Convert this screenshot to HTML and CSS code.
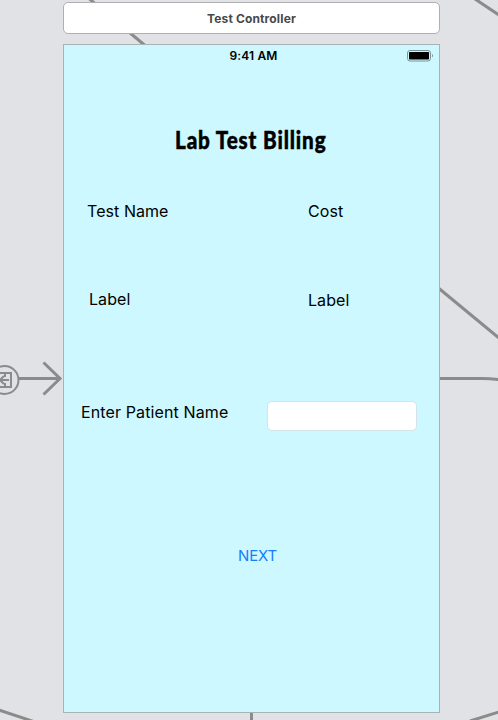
FILE: index.html
```html
<!DOCTYPE html>
<html lang="en">
<head>
<meta charset="utf-8">
<title>Test Controller</title>
<link rel="stylesheet" href="styles.css">
</head>
<body>
<svg class="connections" width="498" height="720" viewBox="0 0 498 720" aria-hidden="true">
  <path d="M86-4L148 48M472-3L502 17M436 286L502 340.500M436 378.500H482Q492 378.500 502 380M251.500 710V722M-4 709L38 723M470 721L502 711"/>
  <path d="M18 378.500H60M43.500 362.500L60 378.500L43.500 394.500"/>
  <g class="entry">
    <circle cx="4.500" cy="380" r="14"/>
    <path d="M-4 373H11V387H-4M5 373V377M5 383V387M9 380H0M4 376L0 380L4 384"/>
  </g>
</svg>
<main class="scene">
  <header class="scene-title">Test Controller</header>
  <section class="screen">
    <div class="status">
      <span class="time">9:41 AM</span>
      <svg class="battery" width="27" height="12" viewBox="0 0 27 12" aria-label="Battery full">
        <rect class="case" x=".5" y=".5" width="23" height="10.500" rx="2.500"/>
        <rect x="2" y="2" width="20" height="7.500" rx=".7"/>
        <path class="tip" d="M25 4Q27 5.700 25 7.500Z"/>
      </svg>
    </div>
    <h1>Lab Test Billing</h1>
    <div class="row headings"><span class="name">Test Name</span><span class="cost">Cost</span></div>
    <div class="row values"><span class="label">Label</span><span class="label second">Label</span></div>
    <div class="row patient"><label for="patient">Enter Patient Name</label><input id="patient" type="text"></div>
    <button class="next" type="button">NEXT</button>
  </section>
</main>
</body>
</html>
```
FILE: styles.css
```css
* { box-sizing: border-box; }
body {
  margin: 0;
  height: 720px;
  overflow: hidden;
  background: #e1e2e6;
  font-family: Inter, "Liberation Sans", sans-serif;
  color: #000;
}
.connections {
  position: absolute;
  inset: 0;
  fill: none;
  stroke: #8b8b8b;
  stroke-width: 3;
}
.entry { stroke-width: 2; }
.scene {
  position: relative;
  width: 377px;
  margin-left: 63px;
  padding-top: 2px;
}
.scene-title {
  height: 32px;
  border: 1px solid #b0b0b2;
  border-radius: 5px;
  background: #fff;
  color: #484848;
  font-size: 12px;
  font-weight: 700;
  line-height: 31px;
  letter-spacing: .15px;
  text-align: center;
}
.screen {
  display: flex;
  flex-direction: column;
  height: 669px;
  margin-top: 10px;
  border: 1px solid #a9b3b5;
  background: #cdf8ff;
}
.status {
  display: grid;
  grid-template-columns: 1fr auto 1fr;
  align-items: center;
  height: 20px;
  padding: 1px 5px 0 9px;
}
.time {
  grid-column: 2;
  font-size: 12px;
  font-weight: 600;
  letter-spacing: .15px;
}
.battery { justify-self: end; }
.case { fill: none; stroke: #789297; }
.tip { fill: #789297; }
h1 {
  margin: 60px 0 0 111px;
  height: 31px;
  font-family: Lato, sans-serif;
  font-size: 24px;
  font-weight: 900;
  line-height: 30px;
  letter-spacing: 1px;
  white-space: nowrap;
  transform: scaleX(.86);
  transform-origin: left;
  -webkit-text-stroke: .5px #000;
}
.row {
  display: grid;
  height: 22px;
  font-size: 16px;
  line-height: 22px;
  letter-spacing: .06px;
}
.headings { margin-top: 44px; padding-left: 23px; grid-template-columns: 221px 1fr; }
.values { margin-top: 66px; padding-left: 25px; grid-template-columns: 219px 1fr; }
.second { padding-top: 1px; }
.patient {
  height: 30px;
  margin-top: 91px;
  padding-left: 17px;
  grid-template-columns: 186px 150px;
  letter-spacing: .12px;
}
input {
  width: 150px;
  height: 30px;
  border: 1px solid #d4e3e6;
  border-radius: 5px;
  background: #fff;
}
.next {
  align-self: flex-start;
  margin: 115px 0 0 174px;
  padding: 0;
  border: 0;
  background: none;
  color: #167efb;
  font: 400 15px/20px Inter, sans-serif;
  letter-spacing: -.15px;
}
```
